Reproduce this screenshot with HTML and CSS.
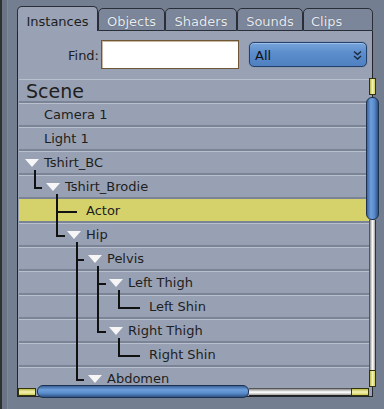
FILE: index.html
```html
<!DOCTYPE html>
<html>
<head>
<meta charset="utf-8">
<link rel="stylesheet" href="styles.css">
</head>
<body>
<div class="window">
  <div class="edge"></div>
  <div class="main">
    <div class="tabs">
      <div class="tab active t-inst">Instances</div>
      <div class="tab t-obj">Objects</div>
      <div class="tab t-sha">Shaders</div>
      <div class="tab t-snd">Sounds</div>
      <div class="tab t-clp">Clips</div>
    </div>
    <div class="panel">
      <div class="findrow">
        <label class="findlabel">Find:</label>
        <div class="findinput"></div>
        <div class="select">
          <span class="select-text">All</span>
          <svg class="chev" width="9" height="11" viewBox="0 0 9 11"><path d="M1 1.5 L4.5 4.5 L8 1.5 M1 6 L4.5 9 L8 6" fill="none" stroke="#1c2a40" stroke-width="1.4"/></svg>
        </div>
      </div>
      <div class="list">
        <div class="row scene">Scene</div>
        <div class="row leaf l0">Camera 1</div>
        <div class="row leaf l0">Light 1</div>
        <div class="row br b0"><span class="tri"></span>Tshirt_BC</div>
        <div class="row br b1"><span class="tri"></span>Tshirt_Brodie</div>
        <div class="row leaf l2 sel">Actor</div>
        <div class="row br b2"><span class="tri"></span>Hip</div>
        <div class="row br b3"><span class="tri"></span>Pelvis</div>
        <div class="row br b4"><span class="tri"></span>Left Thigh</div>
        <div class="row leaf l5">Left Shin</div>
        <div class="row br b4"><span class="tri"></span>Right Thigh</div>
        <div class="row leaf l5">Right Shin</div>
        <div class="row br b3"><span class="tri"></span>Abdomen</div>
        <svg class="tree" width="350" height="306" viewBox="0 0 350 306">
          <path d="M16 91 V110 M15 109 H23
                   M38 115 V158 M37 133 H58 M37 157 H46
                   M58 163 V302 M57 181 H65 M57 301 H65
                   M79 187 V254 M78 205 H87 M78 253 H87
                   M100 211 V230 M99 229 H121
                   M100 259 V278 M99 277 H121"
                fill="none" stroke="#111" stroke-width="2" shape-rendering="crispEdges"/>
        </svg>
      </div>
      <div class="vscroll">
        <div class="sbtn vbtn"></div>
        <div class="vthumb"></div>
        <div class="vtrack"></div>
        <div class="sbtn vbtn"></div>
      </div>
      <div class="hscroll">
        <div class="sbtn hbtn"></div>
        <div class="hthumb"></div>
        <div class="htrack"></div>
        <div class="sbtn hbtn"></div>
      </div>
    </div>
  </div>
</div>
</body>
</html>
```
FILE: styles.css
```css
html, body {
  margin: 0;
  padding: 0;
}
body {
  width: 384px;
  height: 409px;
  overflow: hidden;
  background: #737e90;
  font-family: "DejaVu Sans", "Liberation Sans", sans-serif;
  font-size: 13px;
  color: #1e1e1e;
}
.window {
  display: flex;
  height: 409px;
}
.edge {
  width: 5px;
  flex: none;
  border-left: 2px solid #2e3330;
  background: #6a7486;
  border-right: 1px solid #7e889a;
}
.main {
  padding-left: 9px;
  padding-top: 6px;
  flex: none;
  width: 360px;
}
.tabs {
  display: flex;
  align-items: flex-end;
  height: 25px;
}
.tab {
  box-sizing: border-box;
  text-align: center;
  line-height: 15px;
  border: 1px solid #2a2e36;
  border-radius: 5px 5px 0 0;
  background: #7c869a;
  color: #e8ebf0;
  height: 23px;
  padding-top: 5px;
  text-shadow: 0 0 1px rgba(40,45,55,0.6);
}
.tab.active {
  background: #9aa3b5;
  color: #1e1e1e;
  border-bottom: none;
  height: 25px;
  padding-top: 7px;
  text-shadow: none;
}
.t-inst { width: 81px; }
.t-obj { width: 67px; }
.t-sha { width: 72px; }
.t-snd { width: 66px; }
.t-clp { width: 70px; text-align: left; padding-left: 7px; }

.panel {
  position: relative;
  box-sizing: border-box;
  width: 356px;
  height: 366px;
  background: #99a2b4;
  border: 1px solid #22262c;
  border-top: none;
}
.findrow {
  display: flex;
  align-items: center;
  padding-top: 9px;
  height: 29px;
}
.findlabel {
  width: 81px;
  text-align: right;
  padding-top: 1px;
}
.findinput {
  box-sizing: border-box;
  margin-left: 2px;
  width: 138px;
  height: 29px;
  background: #ffffff;
  border: 1px solid #6f5636;
  box-shadow: inset 1px 1px 0 #c9b89e;
}
.select {
  box-sizing: border-box;
  margin-left: 10px;
  width: 118px;
  height: 25px;
  display: flex;
  align-items: flex-end;
  justify-content: space-between;
  padding: 0 4px 3px 5px;
  border: 1px solid #23416a;
  border-radius: 5px;
  background: linear-gradient(#77a4da, #5b8ccb 45%, #4f80c1);
  box-shadow: inset 0 1px 0 #9cc0ea, 0 0 1px #2b4f80;
}
.select-text {
  line-height: 15px;
  color: #111;
}
.chev {
  margin-bottom: 2px;
}

.list {
  position: relative;
  margin-top: 10px;
  margin-left: 1px;
  width: 350px;
  height: 306px;
  overflow: hidden;
}
.row {
  box-sizing: border-box;
  height: 24px;
  display: flex;
  align-items: center;
  background: #98a1b3;
  border-top: 1px solid #b9c0cd;
  border-bottom: 2px solid #7a8496;
  white-space: nowrap;
}
.row.sel {
  background: #d6d26b;
  border-top-color: #d6d26b;
}
.scene {
  font-size: 19px;
  padding-left: 7px;
  padding-top: 1px;
}
.tri {
  width: 0;
  height: 0;
  border-left: 7px solid transparent;
  border-right: 7px solid transparent;
  border-top: 8px solid #f6f6f6;
  margin-right: 5px;
}
.l0 { padding-left: 25px; }
.l2 { padding-left: 67px; }
.l5 { padding-left: 130px; }
.b0 { padding-left: 6px; }
.b1 { padding-left: 27px; }
.b2 { padding-left: 48px; }
.b3 { padding-left: 69px; }
.b4 { padding-left: 90px; }
.tree {
  position: absolute;
  left: 0;
  top: 0;
  pointer-events: none;
}

.vscroll {
  position: absolute;
  left: 348px;
  top: 47px;
  width: 13px;
  display: flex;
  flex-direction: column;
  align-items: center;
}
.hscroll {
  position: absolute;
  left: 0;
  top: 354px;
  height: 13px;
  display: flex;
  align-items: center;
}
.sbtn {
  box-sizing: border-box;
  border: 1px solid #34340c;
  background: #e4e17a;
}
.vbtn {
  width: 7px;
  height: 17px;
  background: linear-gradient(90deg, #b8b54a, #f6f4b4 50%, #cfcc5c);
}
.vbtn:first-child {
  margin-bottom: 2px;
}
.hbtn {
  width: 18px;
  height: 8px;
  background: linear-gradient(#bdb94c, #f6f4b4 50%, #cfcc5c);
}
.hbtn:first-child {
  margin-right: 1px;
}
.vthumb {
  box-sizing: border-box;
  width: 13px;
  height: 123px;
  border: 1px solid #1c3050;
  border-radius: 6px;
  background: linear-gradient(90deg, #3a649c, #6d9fdc 35%, #5a8ccc 65%, #2f5283);
}
.hthumb {
  box-sizing: border-box;
  width: 212px;
  height: 13px;
  border: 1px solid #1c3050;
  border-radius: 6px;
  background: linear-gradient(#3a649c, #6d9fdc 35%, #5a8ccc 65%, #2f5283);
}
.vtrack {
  box-sizing: border-box;
  width: 7px;
  height: 150px;
  border-left: 1px solid #555;
  border-right: 1px solid #333;
  background: linear-gradient(90deg, #8c8c8c, #f4f4f4 45%, #ffffff 55%, #a0a0a0);
}
.htrack {
  box-sizing: border-box;
  width: 102px;
  height: 8px;
  border-top: 1px solid #555;
  border-bottom: 1px solid #222;
  background: linear-gradient(#8c8c8c, #f4f4f4 45%, #ffffff 55%, #a0a0a0);
}
```
